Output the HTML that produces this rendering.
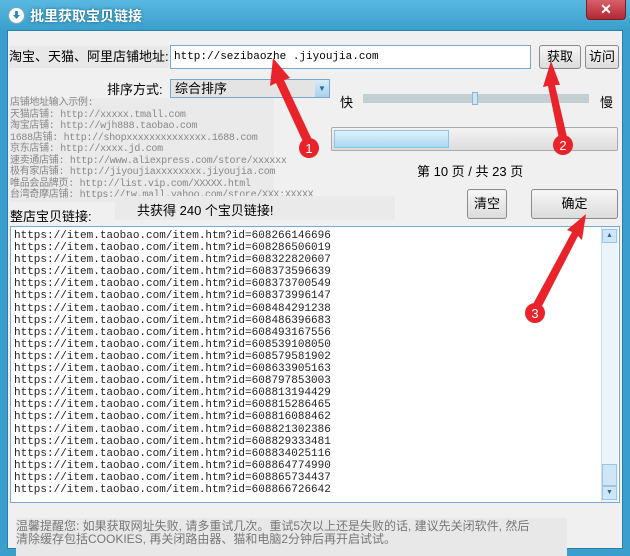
<!DOCTYPE html>
<html><head><meta charset="utf-8"><style>
*{margin:0;padding:0;box-sizing:border-box}
body{width:630px;height:556px;background:#3a9fcc;position:relative;overflow:hidden;font-family:"Liberation Sans","Noto Sans CJK SC",sans-serif;font-size:13px;color:#000}
.a{position:absolute}
.title{left:0;top:0;width:630px;height:30px;background:linear-gradient(#5ab8e0,#3a9fcc)}
.tt{left:30px;top:6px;color:#fff;font-weight:bold;font-size:14px;text-shadow:0 0 3px #1a5f80}
.close{left:586px;top:0;width:40px;height:20px;background:linear-gradient(#d8606a,#b02834);border:1px solid #7a2020;border-top:none;border-radius:0 0 4px 4px;color:#fff;text-align:center;font-weight:bold;font-size:14px;line-height:18px}
.main{left:7px;top:30px;width:616px;height:519px;background:#f0f0f0;border:1px solid #2a7fa8}
.btn{background:linear-gradient(#f6f6f6,#dcdcdc);border:1px solid #8a8a8a;border-radius:3px;text-align:center}
.inp{background:#fff;border:1px solid #7aa7cc}
.mono{font-family:"Liberation Mono","Noto Sans CJK SC",monospace}
.ex{left:10px;top:98px;font-size:10px;line-height:11.5px;color:#888;white-space:pre;background:#eaeaea;width:264px;letter-spacing:-0.3px}
.list{left:10px;top:226px;width:610px;height:277px;background:#fff;border:1px solid #7aa7cc}
.lines{left:3px;top:3px;font-size:11px;line-height:12.1px;white-space:pre;color:#222}
</style></head><body>
<div class="a title"></div>
<div class="a" style="left:8px;top:7px;width:17px;height:17px;border-radius:50%;background:#fff;border:1px solid #7ab"><div style="margin:3px auto 0;width:7px;height:8px;background:#2a8ac0;clip-path:polygon(30% 0,70% 0,70% 50%,100% 50%,50% 100%,0 50%,30% 50%)"></div></div>
<div class="a tt">批里获取宝贝链接</div>
<div class="a close">✕</div>
<div class="a main"></div>
<div class="a" style="left:9px;top:46px;width:160px;height:22px;background:#e8e8e8;font-size:13px;line-height:22px">淘宝、天猫、阿里店铺地址:</div>
<div class="a inp mono" style="left:170px;top:45px;width:361px;height:24px;font-size:11px;line-height:22px;padding-left:3px">http://sezibaozhe .jiyoujia.com</div>
<div class="a btn" style="left:539px;top:45px;width:42px;height:24px;line-height:22px">获取</div>
<div class="a btn" style="left:585px;top:45px;width:34px;height:24px;line-height:22px">访问</div>
<div class="a" style="left:107px;top:79px">排序方式:</div>
<div class="a inp" style="left:170px;top:79px;width:160px;height:19px;background:#e4e4e4;line-height:17px;padding-left:4px">综合排序<div class="a" style="right:0;top:0;width:14px;height:17px;background:linear-gradient(#d8ecf8,#a8d0ec);color:#2a6a9a;font-size:8px;text-align:center;line-height:17px">▼</div></div>
<div class="a ex mono">店铺地址输入示例:
天猫店铺: http://xxxxx.tmall.com
淘宝店铺: http://wjh888.taobao.com
1688店铺: http://shopxxxxxxxxxxxxxx.1688.com
京东店铺: http://xxxx.jd.com
速卖通店铺: http://www.aliexpress.com/store/xxxxxx
极有家店铺: http://jiyoujiaxxxxxxxx.jiyoujia.com
唯品会品牌页: http://list.vip.com/XXXXX.html
台湾奇摩店铺: https://tw.mall.yahoo.com/store/XXX:XXXXX</div>
<div class="a" style="left:340px;top:92px">快</div>
<div class="a" style="left:363px;top:94px;width:226px;height:9px;background:#c4cfd4"></div>
<div class="a" style="left:472px;top:92px;width:6px;height:13px;background:#cde6f6;border:1px solid #8ab8d8"></div>
<div class="a" style="left:600px;top:92px">慢</div>
<div class="a" style="left:331px;top:127px;width:287px;height:24px;background:linear-gradient(#f4f4f4,#dcdcdc);border:1px solid #aaa;border-radius:2px"><div style="margin:2px;width:115px;height:18px;background:linear-gradient(#dff1fb,#a9d8f2);border:1px solid #8cc4e4"></div></div>
<div class="a" style="left:417px;top:161px">第 10 页 / 共 23 页</div>
<div class="a" style="left:10px;top:206px">整店宝贝链接:</div>
<div class="a" style="left:115px;top:196px;width:280px;height:24px;background:#eaeaea;padding:4px 22px;font-size:13px">共获得 240 个宝贝链接!</div>
<div class="a btn" style="left:467px;top:189px;width:40px;height:30px;line-height:28px">清空</div>
<div class="a btn" style="left:531px;top:189px;width:87px;height:30px;line-height:28px">确定</div>
<div class="a list"><div class="a lines mono">https://item.taobao.com/item.htm?id=608266146696
https://item.taobao.com/item.htm?id=608286506019
https://item.taobao.com/item.htm?id=608322820607
https://item.taobao.com/item.htm?id=608373596639
https://item.taobao.com/item.htm?id=608373700549
https://item.taobao.com/item.htm?id=608373996147
https://item.taobao.com/item.htm?id=608484291238
https://item.taobao.com/item.htm?id=608486396683
https://item.taobao.com/item.htm?id=608493167556
https://item.taobao.com/item.htm?id=608539108050
https://item.taobao.com/item.htm?id=608579581902
https://item.taobao.com/item.htm?id=608633905163
https://item.taobao.com/item.htm?id=608797853003
https://item.taobao.com/item.htm?id=608813194429
https://item.taobao.com/item.htm?id=608815286465
https://item.taobao.com/item.htm?id=608816088462
https://item.taobao.com/item.htm?id=608821302386
https://item.taobao.com/item.htm?id=608829333481
https://item.taobao.com/item.htm?id=608834025116
https://item.taobao.com/item.htm?id=608864774990
https://item.taobao.com/item.htm?id=608865734437
https://item.taobao.com/item.htm?id=608866726642</div>
<div class="a" style="left:590px;top:0;width:17px;height:275px;background:#eaf4fa;border-left:1px solid #d0e0ea"></div>
<div class="a" style="left:591px;top:2px;width:15px;height:14px;background:#cfe6f6;border:1px solid #9cc4e0;font-size:7px;color:#2a6a9a;text-align:center;line-height:12px">▲</div>
<div class="a" style="left:591px;top:237px;width:15px;height:22px;background:#cfe6f6;border:1px solid #9cc4e0"></div>
<div class="a" style="left:591px;top:259px;width:15px;height:14px;background:#cfe6f6;border:1px solid #9cc4e0;font-size:7px;color:#2a6a9a;text-align:center;line-height:12px">▼</div>
</div>
<div class="a" style="left:16px;top:518px;width:551px;height:38px;background:#e8e8e8;color:#777;font-size:12px;line-height:13px;padding-top:2px">温馨提醒您: 如果获取网址失败, 请多重试几次。重试5次以上还是失败的话, 建议先关闭软件, 然后<br>清除缓存包括COOKIES, 再关闭路由器、猫和电脑2分钟后再开启试试。</div>
<svg class="a" style="left:0;top:0" width="630" height="556">
<g fill="#e8242a">
<polygon points="273,58 290,78 284,80 313,142 305,146 276,83 270,86"/>
<circle cx="309" cy="148" r="10"/>
<polygon points="551,61 560,85 555,85 567,137 559,139 548,86 543,87"/>
<circle cx="563" cy="145" r="10"/>
<polygon points="586,214 582,240 578,236 540,310 532,306 572,232 567,230"/>
<circle cx="535" cy="313" r="10"/>
</g>
<g fill="#fff" font-family="Liberation Sans" font-size="13" text-anchor="middle"><text x="309" y="153">1</text><text x="563" y="150">2</text><text x="535" y="318">3</text></g>
</svg>
</body></html>
